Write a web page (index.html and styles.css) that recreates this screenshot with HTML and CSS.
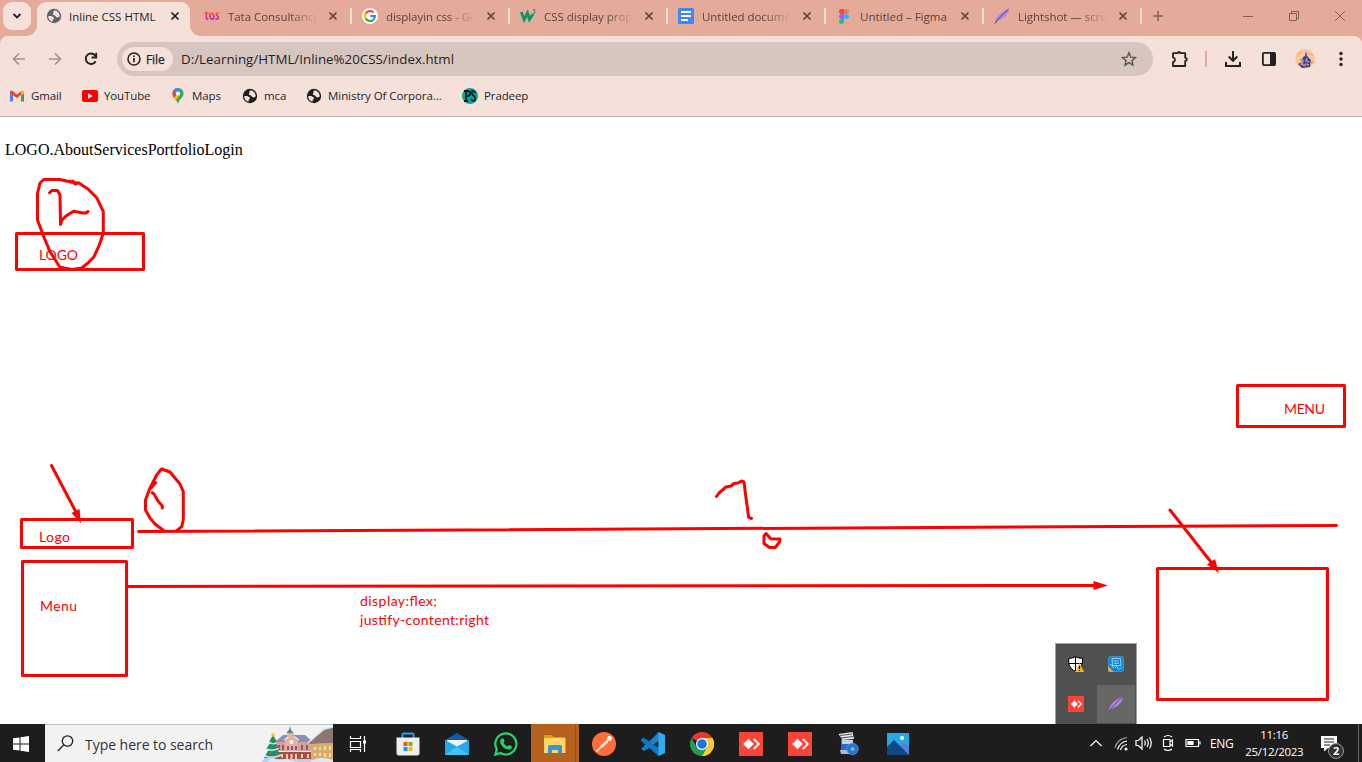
FILE: index.html
```html
<!DOCTYPE html>
<html lang="en">
<head>
<meta charset="utf-8">
<title>Inline CSS HTML</title>
<link rel="stylesheet" href="styles.css">
</head>
<body>
<svg class="defs" width="0" height="0">
  <symbol id="close" viewBox="0 0 10 10"><path d="M1.500 1.500l7 7M8.500 1.500l-7 7" fill="none" stroke="currentColor" stroke-width="1.700"/></symbol>
  <symbol id="globe" viewBox="0 0 16 16"><circle cx="8" cy="8" r="7.200" fill="currentColor"/><path d="M2.200 8.200c2.500-.4 4.600.1 5.600 1.500.7 1.100-.2 1.700-1.200 2v2c-2.600-.6-4.400-2.700-4.400-5.500zM9.300 2.300c-1.900.4-2.600 1.600-1.600 2.500-1.300.6-.9 2 .2 2.300 1.700.4 1.600 2.200 3.500 2.300 1.200 0 1.600-1 2.400-1-.2-3-1.800-5.200-4.500-6.100z" fill="#f5e1da"/></symbol>
  <symbol id="anydesk" viewBox="0 0 24 24"><path d="M0 0h24v24H0z" fill="#fb4338"/><path d="M9.500 6.700l5.300 5.300-5.300 5.300L4.200 12zM14 7.600l4.400 4.400-4.400 4.400 1.600 1.200L21 12l-5.400-5.600z" fill="#fff"/></symbol>
  <symbol id="feather" viewBox="0 0 16 16"><path d="M.8 15.500C.5 10 6 4 15 .8 15.200 4.500 11.500 10.500 3.200 13z" fill="#b08bd8"/><path d="M1 15.500C4 10.500 9 6 14.500 1.200" stroke="#6a2fa0" stroke-width="1" fill="none"/></symbol>
</svg>

<header class="browser">
  <div class="tabstrip">
    <div class="tab-search"><svg width="10" height="8" viewBox="0 0 10 8"><path d="M1.500 2L5 5.500 8.500 2" fill="none" stroke="#222" stroke-width="1.900"/></svg></div>
    <div class="tab active"><svg class="fav gray"><use href="#globe"/></svg><span class="title">Inline CSS HTML</span><svg class="x"><use href="#close"/></svg></div>
    <div class="tab"><svg class="fav" viewBox="0 0 16 16"><defs><linearGradient id="tcs" y2="1" x2="0"><stop stop-color="#f58a1f"/><stop offset=".45" stop-color="#ee2a5d"/><stop offset="1" stop-color="#b01fb0"/></linearGradient></defs><path d="M2.300 3.300v6q0 2 2 2M.5 5h4.300M9.500 5.400C6.500 4 5.800 6 5.900 8.300c.2 3.500 3.400 3.400 4 1.500.6-2.300-.6-3.600-1.600-2.800M15 5.200c-2.600-1-3.600 1.200-1.900 2.400 2.300 1.200 1.700 4-1.600 3.300" fill="none" stroke="url(#tcs)" stroke-width="1.500"/></svg><span class="title cut">Tata Consultancy</span><svg class="x"><use href="#close"/></svg></div>
    <div class="tab"><svg class="fav" viewBox="0 0 16 16"><circle cx="8" cy="8" r="8" fill="#fff"/><g fill="none" stroke-width="2.200"><path d="M3.800 5.400A5 5 0 0 1 11.600 4.500" stroke="#ea4335"/><path d="M3.800 10.600a5 5 0 0 1 0-5.200" stroke="#fbbc05"/><path d="M11.400 11.700a5 5 0 0 1-7.600-1.100" stroke="#34a853"/><path d="M8.200 8h4.700a5 5 0 0 1-1.500 3.700" stroke="#4285f4"/></g></svg><span class="title cut">displayin css - Go</span><svg class="x"><use href="#close"/></svg></div>
    <div class="tab"><svg class="fav" viewBox="0 0 16 16"><path d="M1.200 4l3 7.500L7.500 5l2 6.500L13 6" fill="none" stroke="#059862" stroke-width="2.800"/><path d="M13 1.500h2l-1 1.700q1.500 0 1 1.500-.6 1-2 .3" fill="none" stroke="#059862" stroke-width=".9"/></svg><span class="title cut">CSS display prop</span><svg class="x"><use href="#close"/></svg></div>
    <div class="tab"><svg class="fav" viewBox="0 0 16 16"><rect width="16" height="16" rx="1.500" fill="#4285f4"/><path d="M3 4h10M3 8h10M3 12h7" stroke="#fff" stroke-width="2"/></svg><span class="title cut">Untitled docume</span><svg class="x"><use href="#close"/></svg></div>
    <div class="tab"><svg class="fav" viewBox="0 0 16 16"><path d="M8 1H5.500a2.500 2.500 0 0 0 0 5H8z" fill="#f24e1e"/><path d="M8 1h2.500a2.500 2.500 0 0 1 0 5H8z" fill="#ff7262"/><path d="M8 6H5.500a2.500 2.500 0 0 0 0 5H8z" fill="#a259ff"/><circle cx="10.500" cy="8.500" r="2.500" fill="#1abcfe"/><path d="M8 11H5.500A2.500 2.500 0 1 0 8 13.500z" fill="#0acf83"/></svg><span class="title">Untitled – Figma</span><svg class="x"><use href="#close"/></svg></div>
    <div class="tab"><svg class="fav"><use href="#feather"/></svg><span class="title cut">Lightshot — scre</span><svg class="x"><use href="#close"/></svg></div>
    <svg class="plus" width="12" height="12" viewBox="0 0 12 12"><path d="M6 1v10M1 6h10" stroke="#80615a" stroke-width="1.500"/></svg>
    <div class="window-buttons">
      <svg viewBox="0 0 12 12"><path d="M1 6.500h10" /></svg>
      <svg viewBox="0 0 12 12"><path d="M1.500 3.500h7v7h-7zM3.500 3.500v-2h7v7h-2"/></svg>
      <svg viewBox="0 0 12 12"><path d="M1 1l10 10M11 1L1 11"/></svg>
    </div>
  </div>

  <div class="toolbar">
    <div class="nav">
      <svg class="faded" viewBox="0 0 16 16"><path d="M14 8H3M8 2.500L2.500 8 8 13.500"/></svg>
      <svg class="faded" viewBox="0 0 16 16"><path d="M2 8h11M8 2.500L13.500 8 8 13.500"/></svg>
      <svg viewBox="0 0 16 16"><path d="M12.600 10.200A5.200 5.200 0 1 1 12 4.400L13.300 6" stroke-width="1.900"/><path d="M13.200 1.800v4.700H8.600" stroke-width="1.900"/></svg>
    </div>
    <div class="omnibox">
      <span class="chip"><svg width="14" height="14" viewBox="0 0 14 14"><circle cx="7" cy="7" r="6" fill="none" stroke="#222" stroke-width="1.500"/><path d="M7 6v4.300M7 3.500v1.500" stroke="#222" stroke-width="1.600"/></svg>File</span>
      <span class="url">D:/Learning/HTML/Inline%20CSS/index.html</span>
      <svg class="star" width="16" height="16" viewBox="0 0 16 16"><path d="M8 1.700l1.800 4.400 4.700.4-3.600 3.100 1.100 4.600L8 11.700l-4 2.500 1.100-4.600L1.500 6.500l4.700-.4z" fill="none" stroke="#5b5755" stroke-width="1.400"/></svg>
    </div>
    <div class="actions">
      <svg width="18" height="18" viewBox="0 0 18 18"><path d="M2 3.200h4.800V3q.2-1.200 1.200-1.200T9.200 3v.2h5v4.600h.3q1.400.2 1.400 1.500t-1.400 1.500h-.3V16H2v-3.800q2-.6 2-2.400T2 7.400z" fill="none" stroke="#222" stroke-width="1.800" stroke-linejoin="round"/></svg>
      <i class="divider"></i>
      <svg width="18" height="18" viewBox="0 0 18 18"><path d="M9 1v9.500M4.700 6.500L9 10.800l4.300-4.300M2 12v4h14v-4" fill="none" stroke="#222" stroke-width="2"/></svg>
      <svg width="16" height="16" viewBox="0 0 16 16"><rect x="1.900" y="1.900" width="12.200" height="12.200" rx="1" fill="none" stroke="#222" stroke-width="1.800"/><path d="M9 1h5v14H9z" fill="#222"/></svg>
      <svg width="20" height="20" viewBox="0 0 20 20"><circle cx="10" cy="10" r="10" fill="#ffc894"/><path d="M2 6l5-3M13 5l5 1" stroke="#f2a36c"/><path d="M11 2l1 5 4 4-1 7-8 1-4-4 4-2 1-5 2-1z" fill="#1250ac"/><path d="M5 10l3 2-2 4M12 9l-1 3 3 1M10 15l4 1M6 14l4 3M15 14l3-1" stroke="#f47c72" stroke-width="1.600" fill="none"/></svg>
      <svg width="4" height="16" viewBox="0 0 4 16" fill="#222"><circle cx="2" cy="2.500" r="1.700"/><circle cx="2" cy="8" r="1.700"/><circle cx="2" cy="13.500" r="1.700"/></svg>
    </div>
  </div>

  <nav class="bookmarks">
    <a class="bm gmail"><svg width="16" height="16" viewBox="0 0 16 16"><path d="M1 4v9.500h3V7z" fill="#4285f4"/><path d="M15 4v9.500h-3V7z" fill="#34a853"/><path d="M1 3.500q1-1.500 2.500-.5L8 6.500 12 3.200V7L8 10 1 5.300z" fill="#ea4335"/><path d="M12 3.200q2.500-1.700 3 .8v1.200L12 7.500z" fill="#fbbc04"/></svg>Gmail</a>
    <a class="bm youtube"><svg width="16" height="12" viewBox="0 0 16 12"><rect width="16" height="12" rx="2" fill="#f00"/><path d="M6 3.300v5.400L10.700 6z" fill="#fff"/></svg>YouTube</a>
    <a class="bm maps"><svg width="16" height="16" viewBox="0 0 16 16"><path d="M8 0a5.500 5.500 0 0 1 5.500 5.500C13.500 9.500 9 11 8 16 7.200 12 2.500 9.500 2.500 5.500A5.500 5.500 0 0 1 8 0z" fill="#34a853"/><path d="M3.700 2L6.600 7 4 10Q2.500 8 2.500 5.500T3.700 2z" fill="#ea4335"/><path d="M4 10l7-8.500Q7-1.500 3.700 2L7 6z" fill="#4285f4"/><path d="M4 10l3-4 3 1-4 5z" fill="#fbbc04"/><circle cx="8" cy="5.500" r="2.100" fill="#fff"/></svg>Maps</a>
    <a class="bm mca"><svg width="16" height="16"><use href="#globe"/></svg>mca</a>
    <a class="bm ministry"><svg width="16" height="16"><use href="#globe"/></svg>Ministry Of Corpora...</a>
    <a class="bm pradeep"><svg width="16" height="16" viewBox="0 0 16 16"><circle cx="8" cy="8" r="8" fill="#0aa3a0"/><path d="M4 3v10M2 3H6q2.500.3 2.200 2.700T5 8.300M2 13h4M13.500 5Q10 1 9.500 4.500c0 3 4.500 3.500 3.800 7-.9 2.300-3 1.500-4.300-.5" fill="none" stroke="#061d1d" stroke-width="1.800"/></svg>Pradeep</a>
  </nav>
</header>

<main class="page"><p>LOGO.AboutServicesPortfolioLogin</p></main>

<svg class="annotations" viewBox="0 0 1362 762">
  <g class="ink">
    <rect x="16.500" y="233.500" width="127" height="36"/>
    <path d="M43.700 179.500H60L71.700 182.300 79 183 83.300 186 88 189 96.700 197.700 103.300 211.700V233.300L99.300 245 94 256.700 88 263 81.700 268 72 269.500 60 267.300 50 251.700 43.500 236 37.500 220V193.300L40 183zM70 181l6 3M73 181l2 3"/>
    <path d="M49.500 192.700L51.700 190.500H57.500L60 195 60.500 224.500 62 220 66 216 73.500 211.300 83 213 86 213 88 211.500"/>
    <rect x="1237.500" y="385.500" width="107" height="41"/>
    <rect x="21.500" y="519.500" width="111" height="28"/>
    <rect x="22.500" y="561.500" width="104" height="114"/>
    <rect x="1157.500" y="568.500" width="170" height="131"/>
    <path d="M51.500 465.500L77 514M1170 510L1211 562M127 586.500L1096 585.500M138.500 531.500L1336.500 525.500"/>
    <path d="M163 469.500L170 472 180 484 183.300 491.700V520L181.700 526.700 177 530.500M163.300 530.300L155 524 150 518 145.500 510V500L150 488 156.700 475 161 469.500 163 469M155.700 482.700L151 488M152.300 492.700L154 494 158 501 162.300 506V508"/>
    <path d="M716.500 496.500L719 493 726 487 731 486 734 483.500 738 483 741.500 481 744 482 746 498 748.700 517.300 751.500 518.500"/>
    <path d="M766 533.500L770.700 538.700 780 539 779.500 542 775.300 547.500H769.500L764 543.500V536z"/>
  </g>
  <g class="heads"><path d="M81 523.500L71.500 513 79.500 509zM1219 573L1207 564.500 1215 559zM1108 585.500L1093.500 581v9z"/></g>
  <g class="notes">
    <text x="39" y="260" textLength="39">LOGO</text>
    <text x="1284" y="414" textLength="41">MENU</text>
    <text x="39" y="542" textLength="31">Logo</text>
    <text x="40" y="611" textLength="37">Menu</text>
    <text x="360" y="606" textLength="77">display:flex;</text>
    <text x="360" y="625" textLength="129">justify-content:right</text>
  </g>
</svg>

<aside class="tray-popup">
  <span><svg width="16" height="16" viewBox="0 0 16 16"><path d="M7.500.7q3.500 2 7 1.500v5Q13 13 7.500 15.500 2 13 .7 7.500v-5Q4 2.500 7.500.7z" fill="#fff" stroke="#000"/><path d="M7.500 1v14M1 7.500h13" stroke="#000" stroke-width="1.100"/><path d="M11.500 7l4.500 9H7z" fill="#fdb913"/><path d="M11.500 10v3M11.500 14v1" stroke="#000" stroke-width="1.200"/></svg></span>
  <span><svg width="16" height="16" viewBox="0 0 16 16"><rect x=".3" y=".3" width="15.400" height="15.400" rx="2.500" fill="#0b83d6" stroke="#5bb4ea" stroke-width=".6"/><path d="M4 2.500h8.500l.5 7H4.500zM5.500 5h5.500M6 7.300h5M7 12q2-3 3 0t4-1M2 8l4 4" stroke="#9ad8ff" fill="none"/><path d="M0 10l6 6H2q-2 0-2-2z" fill="#d8a944"/></svg></span>
  <span><svg width="16" height="16"><use href="#anydesk"/></svg></span>
  <span class="hover"><svg width="16" height="16"><use href="#feather"/></svg></span>
</aside>

<footer class="taskbar">
  <div class="start"><svg width="16" height="16" viewBox="0 0 16 16"><path d="M0 2.300L6.500 1.400V7.500H0zM7.500 1.200L16 0v7.500H7.500zM0 8.500h6.500v6.100L0 13.700zM7.500 8.500H16V16l-8.500-1.200z" fill="#fff"/></svg></div>
  <div class="search">
    <svg width="17" height="17" viewBox="0 0 17 17"><circle cx="10.500" cy="6" r="5.200" fill="none" stroke="#222" stroke-width="1.300"/><path d="M6.800 9.700L.8 16" stroke="#222" stroke-width="1.300"/></svg>
    <span>Type here to search</span>
    <svg class="village" width="71" height="37" viewBox="0 0 71 37">
      <path d="M0 37q2-6 9-5l20-2 42 3v4z" fill="#b9cfee"/>
      <path d="M14 17h36v17H14z" fill="#dc9f98"/><path d="M13 17l8-7h22l8 7z" fill="#8990b5"/><path d="M23 15l6-4 7 4v19H23z" fill="#e8aea5"/><path d="M22 15l7.500-5 7.500 5" fill="none" stroke="#f6e9e8" stroke-width="1.500"/>
      <path d="M25 10V7l2-2 1-4 1 4 2 2v3z" fill="#6677a4"/><path d="M25 8h7v4h-7z" fill="#e7b58c"/>
      <circle cx="29.500" cy="17" r="2" fill="#fff"/><path d="M17 20v5M21 20v5M26 21v4M30 21v4M34 21v4M40 20v5M45 20v5" stroke="#7b6078" stroke-width="2"/>
      <path d="M13 27h38v7H13z" fill="#a54e4d"/><path d="M16 29v4M20 29v4M25 29v5M29.500 29v5M34 29v5M40 29v4M46 29v4" stroke="#f4cf9a" stroke-width="2"/><path d="M13 26.500h38" stroke="#f4e6e5"/>
      <path d="M49 19l22-1v17H49z" fill="#d7ad72"/><path d="M46 18L62 5l9-3v16l-22 1z" fill="#8c7770"/><path d="M46 18L62 4l9-2" stroke="#dbe4f6" stroke-width="1.500" fill="none"/><path d="M53 22v3M58 22v3M63 21v4M68 21v4M53 28v3M58 28v3M63 28v4M68 28v4" stroke="#f7df91" stroke-width="2"/>
      <path d="M11 10l4 7h-2l5 7h-3l5 9H2l5-9H4l5-7H7z" fill="#1b9168"/><path d="M7 17q4 3 7 1M5 24q6 3 12-1M3 31q8 3 16-1" stroke="#d8eafa" stroke-width="1.500" fill="none"/><path d="M9 20h1M14 21h1M8 28h1M14 29h1" stroke="#f04444" stroke-width="2"/><circle cx="11" cy="10" r="1.700" fill="#ffc400"/><path d="M6 37q3-6 10-2l8-1 12 3zM48 37q8-7 23-2v2z" fill="#d9e6fb"/>
    </svg>
  </div>
  <div class="apps">
    <span class="taskview"><svg width="18" height="18" viewBox="0 0 18 18"><path d="M1.500 1v2.500h10V1M1.500 6.500h10v6h-10zM1.500 17v-2.500h10V17M15.500 1v16" fill="none" stroke="#fff" stroke-width="1.200"/><path d="M14 5.500h3v3h-3z" fill="#fff"/></svg></span>
    <span><svg width="24" height="24" viewBox="0 0 24 24"><path d="M6.500 6V2.500q0-1 1-1h9q1 0 1 1V6" fill="none" stroke="#20a5e4" stroke-width="2"/><path d="M.5 5.500h23V21q0 2.500-2.500 2.500H3Q.5 23.500.5 21z" fill="#eee"/><path d="M7.500 10h4v4h-4z" fill="#f15022"/><path d="M12.500 10h4v4h-4z" fill="#7eb900"/><path d="M7.500 15h4v4h-4z" fill="#009fea"/><path d="M12.500 15h4v4h-4z" fill="#ffb800"/></svg></span>
    <span><svg width="24" height="24" viewBox="0 0 24 24"><path d="M0 8L12 1l12 7v4H0z" fill="#0b5cb0"/><path d="M2 8h20v8H2z" fill="#f1f3f8"/><path d="M0 8l12 6.500L24 8v15H0z" fill="#26a7e8"/><path d="M0 23l12-8.500L24 23z" fill="#42c3f5"/></svg></span>
    <span><svg width="24" height="24" viewBox="0 0 24 24"><path d="M2.800 17.300A10.500 10.500 0 1 1 6.500 21L1.300 22.600z" fill="none" stroke="#25d366" stroke-width="2.200"/><path d="M7.500 6.500q2-.9 2.500 1.300l.5 1.500-1 1.500q1.200 2.700 4 3.700l1.500-1.600 2.800 1.400q.2 3.200-3.300 3.200-5-.5-7.800-5.500Q5.300 8 7.500 6.500z" fill="#25d366"/></svg></span>
    <span class="running"><svg width="24" height="24" viewBox="0 0 24 24"><path d="M1 3h8l2 2h10.500v16H1z" fill="#e0a100"/><path d="M1 6h21.500v15H1z" fill="#ffd767"/><path d="M5 21v-6.500q0-1.500 1.500-1.500h11q1.500 0 1.500 1.500V21h-4v-3H9v3z" fill="#3995da"/></svg></span>
    <span><svg width="24" height="24" viewBox="0 0 24 24"><circle cx="12" cy="12" r="12" fill="#ff6c37"/><path d="M4.500 19.500l5-5M8.500 15l7.500-7" stroke="#fff" stroke-width="1.300"/><path d="M8.500 15l5.500-6.500 2.500 1.500-6 5.500z" fill="#ffe7df"/><circle cx="17.500" cy="6.500" r="2.400" fill="#fff"/></svg></span>
    <span><svg width="24" height="24" viewBox="0 0 24 24"><path d="M17.500 0L24 3v18l-6.500 3-5-5 5-4V9L3.500 19 0 17 12.300 5.500z" fill="#1683d2"/><path d="M0 7.500l2.500-2L17.500 16v8L0 8.700z" fill="#087bc5"/><path d="M17.500 0L24 3v18l-6.500 3z" fill="#32aaf1"/></svg></span>
    <span><svg width="24" height="24" viewBox="0 0 24 24"><path d="M12 12L1.600 6A12 12 0 0 1 22.400 6z" fill="#e33b2e"/><path d="M12 12l10.400-6A12 12 0 0 1 12 24l5.200-9z" fill="#fcc934"/><path d="M12 6h10.400A12 12 0 0 1 12 24l5-9z" fill="#fcc934"/><path d="M1.600 6A12 12 0 0 0 12 24l5.200-9H6.800z" fill="#229d50"/><circle cx="12" cy="12" r="6" fill="#fff"/><circle cx="12" cy="12" r="4.800" fill="#1a73e8"/></svg></span>
    <span><svg width="24" height="24"><use href="#anydesk"/></svg></span>
    <span><svg width="24" height="24"><use href="#anydesk"/></svg></span>
    <span><svg width="24" height="24" viewBox="0 0 24 24"><path d="M1.500 2l14-2 1.500 7H5z" fill="#e6e9ed"/><path d="M3 3.500l12-1.500M4 6l12-1.500" stroke="#50545a"/><path d="M4 7l12 1v12H4z" fill="#2a6bc9"/><path d="M5 7l11 1v4H5z" fill="#c9d3df"/><path d="M3 18h10v4H4z" fill="#a6bdd9"/><circle cx="15.500" cy="17" r="5.800" fill="#2b72cf" stroke="#6aa5ea" stroke-width=".6"/><circle cx="15.500" cy="17" r="1.800" fill="#8bbcf4"/></svg></span>
    <span><svg width="24" height="24" viewBox="0 0 24 24"><path d="M1 1h22v22H1z" fill="#25a8e5"/><path d="M12 16l6-6 5 5v8H12z" fill="#5a7dd2"/><path d="M1 15l7-7 15 15H1z" fill="#0d4887"/><circle cx="16" cy="6" r="2" fill="#fff"/></svg></span>
  </div>
  <div class="tray">
    <svg width="14" height="10" viewBox="0 0 14 10"><path d="M1.500 8L7 2.500 12.500 8"/></svg>
    <svg width="16" height="16" viewBox="0 0 16 16"><path d="M3.500 14.500A12 12 0 0 1 13 6M6.500 15A8 8 0 0 1 13 9.500"/><path d="M1 13A13 13 0 0 1 13 2.500" opacity=".6"/><circle cx="12" cy="14" r="1.500" fill="#fff" stroke="none"/></svg>
    <svg width="18" height="16" viewBox="0 0 18 16"><path d="M1 5.500h2.500L7 2v12l-3.500-3.500H1zM9.500 5.500q1.500 2.500 0 5M12 4q2.500 4 0 8M14.500 2.500q3.500 5.500 0 11"/></svg>
    <svg width="16" height="18" viewBox="0 0 16 18"><path d="M3.500 5.500h6.500v7H3.500zM10 8l2.500-2v6L10 10M4 3q4-3 8 0M4 15q4 3 8 0"/></svg>
    <svg width="16" height="10" viewBox="0 0 16 10"><path d="M1 1.500h12.500v7H1zM15 3.500v3"/><path d="M3 3.500h5v3H3z" fill="#fff"/></svg>
    <span class="lang">ENG</span>
    <div class="clock"><span class="time">11:16</span><span>25/12/2023</span></div>
    <div class="notify"><svg width="18" height="17" viewBox="0 0 18 17"><path d="M1 1h16v12H8l-4 3.500V13H1z" fill="#fff" stroke="none"/><path d="M4 4h10M4 7h10M4 10h6" stroke="#1d1d1d"/></svg><b>2</b></div>
  </div>
</footer>
</body>
</html>
```
FILE: styles.css
```css
* { box-sizing: border-box; }
body { margin: 0; width: 1362px; height: 762px; overflow: hidden; display: flex; flex-direction: column; position: relative; background: #fff; font: 12px "Open Sans", "Noto Sans", sans-serif; color: #1f1f1f; }
svg { display: block; flex: none; }
.defs { position: absolute; }
.browser { height: 117px; background: #e4ab9a; border-bottom: 1px solid #c6b2ac; flex: none; }

.tabstrip { height: 36px; display: flex; align-items: flex-start; }
.tab-search { width: 28px; height: 28px; margin: 2px 5px 0 3px; border-radius: 9px; background: #f5e1da; display: flex; align-items: center; justify-content: center; }
.tab { position: relative; width: 158px; height: 32px; display: flex; align-items: center; padding-left: 10px; color: #5b423b; flex: none; }
.tab:not(.active)::after { content: ""; width: 2px; height: 16px; background: #f5e1da; margin-left: 12px; flex: none; }
.fav { width: 16px; height: 16px; }
.gray { color: #5f6368; }
.title { width: 88px; flex: none; margin-left: 8px; font-size: 11.5px; letter-spacing: 0; white-space: nowrap; line-height: 18px; padding-top: 1px; }
.active .title { margin-left: 7px; margin-right: 1px; }
.cut { letter-spacing: -.05px; -webkit-mask-image: linear-gradient(90deg, #000 70%, transparent 102%); mask-image: linear-gradient(90deg, #000 70%, transparent 102%); }
.x { width: 10px; height: 10px; margin-left: 12px; }
.active { z-index: 1; color: #1f1f1f; }
.active::before { content: ""; position: absolute; z-index: -1; left: 1px; top: 2px; width: 153px; height: 34px; border-radius: 9px 9px 0 0; background: #f5e1da; }
.active::after { content: ""; position: absolute; z-index: -1; left: -9px; top: 26px; width: 173px; height: 10px; background: radial-gradient(circle at 0 0, transparent 9.5px, #f5e1da 10px) left / 10px 10px no-repeat, radial-gradient(circle at 100% 0, transparent 9.5px, #f5e1da 10px) right / 10px 10px no-repeat; }
.plus { margin: 10px 0 0 10px; }
.window-buttons { margin: 10px 16px 0 auto; display: flex; gap: 34px; }
.window-buttons svg { width: 12px; height: 12px; fill: none; stroke: #80615a; stroke-width: 1; }

.toolbar { height: 46px; background: #f5e1da; border-radius: 8px 8px 0 0; display: flex; align-items: center; }
.nav { display: flex; gap: 20px; padding-left: 11px; width: 117px; }
.nav svg { width: 16px; height: 16px; fill: none; stroke: #222; stroke-width: 1.700; }
.nav .faded { stroke: #a39490; }
.omnibox { width: 1036px; height: 34px; border-radius: 17px; background: #d7c6bf; display: flex; align-items: center; padding: 0 16px 0 5px; }
.chip { width: 51px; height: 24px; border-radius: 12px; background: #f5e1da; display: flex; align-items: center; gap: 5px; padding-left: 5px; font-size: 12px; letter-spacing: -.1px; -webkit-text-stroke: .25px #222; }
.url { margin-left: 8px; font-size: 13.300px; letter-spacing: .02px; }
.star { margin-left: auto; }
.actions { display: flex; align-items: center; padding-left: 18px; }
.divider { width: 2px; height: 16px; background: #e4ab9a; margin: 0 17px 0 16px; }
.actions svg:nth-of-type(3) { margin-left: 19px; }
.actions svg:nth-of-type(4) { margin-left: 18px; }
.actions svg:nth-of-type(5) { margin-left: 24px; }

.bookmarks { height: 34px; background: #f5e1da; display: flex; align-items: center; padding: 0 0 7px 9px; }
.bm { display: flex; align-items: center; gap: 6px; font-size: 11.5px; letter-spacing: -.12px; line-height: 15px; white-space: nowrap; }
.gmail { width: 73px; }
.youtube { width: 88px; }
.maps { width: 72px; }
.mca { width: 64px; }
.ministry { width: 156px; letter-spacing: -.06px; }

.page { flex: 1; padding: 24px 5px; }
.page p { margin: 0; font: 16px/18px "Liberation Serif", "Times New Roman", serif; color: #000; }
.annotations { position: absolute; left: 0; top: 0; width: 1362px; height: 762px; }
.ink { fill: none; stroke: #f00; stroke-width: 3; stroke-linejoin: round; stroke-linecap: round; }
.heads { fill: #f00; }
.notes { fill: #f00; font: 14px Lato, sans-serif; }

.tray-popup { position: absolute; left: 1055px; top: 643px; width: 82px; height: 81px; border: 1px solid #a0a0a0; border-bottom: 0; background: #505050; display: grid; grid-template: 40px 40px / 40px 40px; }
.tray-popup span { display: flex; align-items: center; justify-content: center; }
.tray-popup .hover { background: #666; width: 38px; height: 38px; margin: 1px; }

.taskbar { height: 38px; background: #1d1d1d; display: flex; flex: none; color: #fff; }
.start { width: 45px; display: flex; align-items: center; padding: 2px 0 0 13px; }
.search { width: 288px; background: #f2f2f2; border-top: 1px solid #c4c4c4; display: flex; align-items: center; padding-left: 12px; color: #333; font-size: 14px; letter-spacing: -.04px; }
.search span { margin-left: 11px; padding-top: 1px; }
.village { margin-left: auto; }
.apps { display: flex; padding-left: 1px; }
.apps span { width: 49px; display: flex; align-items: center; justify-content: center; padding-top: 2px; }
.apps .taskview { padding-right: 2px; }
.apps .running { width: 48px; margin: 0 0 0 1px; background: linear-gradient(90deg, #b4611f 44px, #984f17 44px, #984f17 45px, #b4611f 45px); }
.tray { flex: 1; display: flex; align-items: center; padding-left: 167px; position: relative; border-right: 1px solid #666; margin-right: 3px; }
.tray > svg, .notify svg { fill: none; stroke: #fff; stroke-width: 1.200; }
.tray > svg:nth-of-type(2) { margin-left: 11px; }
.tray > svg:nth-of-type(3) { margin-left: 5px; }
.tray > svg:nth-of-type(4) { margin-left: 7px; }
.tray > svg:nth-of-type(5) { margin-left: 9px; }
.lang { margin-left: 9px; font-size: 12px; letter-spacing: -.4px; }
.clock { width: 60px; margin-left: 11px; display: flex; flex-direction: column; align-items: center; font-size: 11.5px; line-height: 17px; letter-spacing: -.3px; }
.notify { position: relative; margin-left: 16px; }
.notify b { position: absolute; left: 8px; top: 8px; width: 16px; height: 16px; border: 1px solid #999; border-radius: 50%; background: #333; font-size: 11px; line-height: 14px; text-align: center; }
```
